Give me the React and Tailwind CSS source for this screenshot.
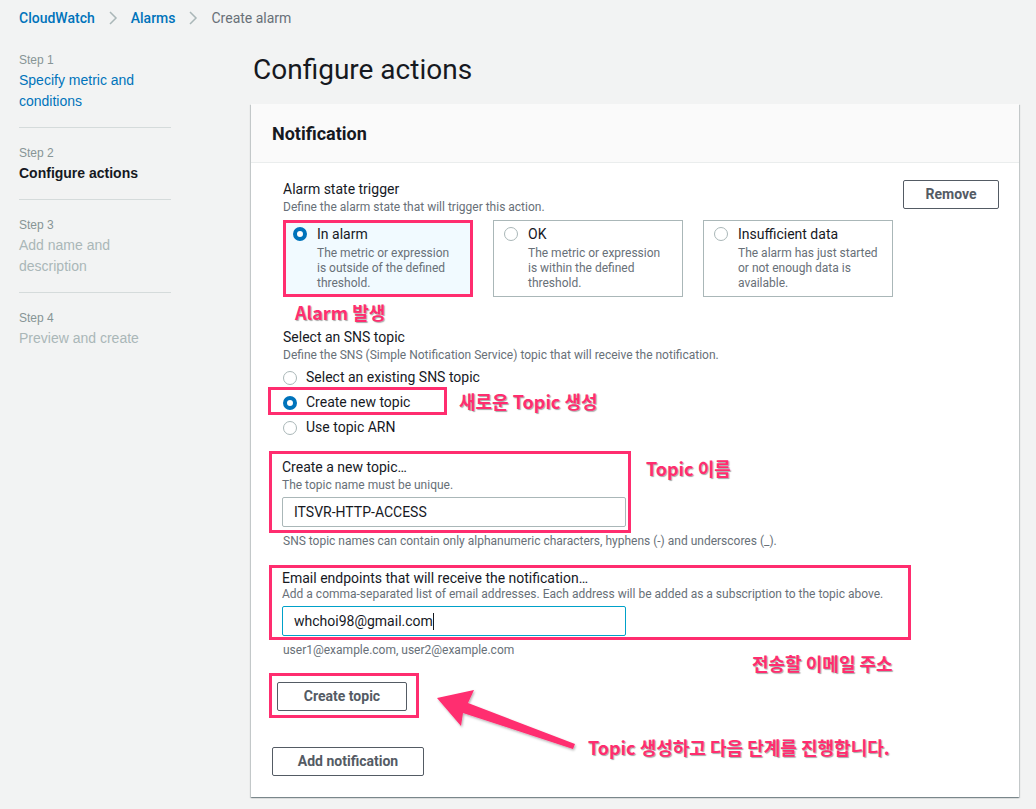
import React from "react";

const ember = { fontFamily: "Roboto, 'Liberation Sans', sans-serif" };

function Radio({ checked }) {
  return checked ? (
    <span className="inline-block w-[14px] h-[14px] rounded-full border-[4px] border-[#0073bb] bg-white shrink-0" />
  ) : (
    <span className="inline-block w-[14px] h-[14px] rounded-full border border-[#aab7b8] bg-white shrink-0" />
  );
}

function Chevron() {
  return (
    <svg width="10" height="16" viewBox="0 0 10 16" className="mx-[13px]">
      <path d="M2 2 L8 8 L2 14" fill="none" stroke="#aab7b8" strokeWidth="1.5" />
    </svg>
  );
}

const annot =
  "font-bold text-[#ff2d6f] text-[18px] leading-[22px] [text-shadow:1px_1px_1px_rgba(0,0,0,0.35)] whitespace-nowrap";
const annotFont = { fontFamily: "'Noto Sans CJK KR', 'Noto Sans', sans-serif" };

function Tile({ checked, title, lines, highlight }) {
  return (
    <div
      className={
        "w-[190px] h-[77px] flex gap-[10px] " +
        (highlight
          ? "border-[3px] border-[#ff2d6f] bg-[#f1faff] pl-[7px] pt-[2px]"
          : "border border-[#aab7b8] bg-white pl-[10px] pt-[4px]")
      }
    >
      <div className="h-[18px] flex items-center">
        <Radio checked={checked} />
      </div>
      <div>
        <div className="text-[14px] leading-[18px] text-[#16191f] whitespace-nowrap">{title}</div>
        <div className="mt-[3px] text-[12px] leading-[15px] text-[#687078] whitespace-nowrap">
          {lines.map((l, i) => (
            <div key={i}>{l}</div>
          ))}
        </div>
      </div>
    </div>
  );
}

function NavItem({ step, title, active, link, last }) {
  return (
    <div className={"pt-[16px] pb-[15px] " + (last ? "" : "border-b border-[#d5dbdb]")}>
      <div className="text-[12px] leading-[18px] text-[#879596]">{step}</div>
      <div
        className={
          "mt-[1px] text-[14px] leading-[21px] " +
          (active ? "font-bold text-[#16191f]" : link ? "text-[#0073bb]" : "text-[#aab7b8]")
        }
      >
        {title}
      </div>
    </div>
  );
}

export default function App() {
  return (
    <div className="min-h-[809px] bg-[#f2f3f3] pl-[19px] pt-[8px]">
      {/* Breadcrumb */}
      <div className="flex items-center text-[14px] leading-[20px]" style={ember}>
        <span className="text-[#0073bb] font-medium">CloudWatch</span>
        <Chevron />
        <span className="text-[#0073bb] font-medium">Alarms</span>
        <Chevron />
        <span className="text-[#687078]">Create alarm</span>
      </div>

      <div className="flex mt-[7px]">
        {/* Left nav */}
        <div className="w-[152px] shrink-0" style={{ fontFamily: "'Liberation Sans', Arial, sans-serif" }}>
          <NavItem step="Step 1" title="Specify metric and conditions" link />
          <NavItem step="Step 2" title="Configure actions" active />
          <NavItem step="Step 3" title="Add name and description" />
          <NavItem step="Step 4" title="Preview and create" last />
        </div>

        {/* Main */}
        <div className="ml-[80px] w-[768px] pt-[18px]" style={ember}>
          <h1 className="pl-[2px] text-[28px] leading-[34px] text-[#16191f] font-normal">Configure actions</h1>

          <div className="relative mt-[17px] bg-white shadow-[0_1px_1px_0_rgba(0,28,36,0.3),1px_1px_1px_0_rgba(0,28,36,0.15),-1px_1px_1px_0_rgba(0,28,36,0.15)]">
            <div className="h-[59px] flex items-center pl-[21px] pt-[1px] bg-[#fafafa] border-b border-[#eaeded]">
              <h2 className="text-[18px] font-bold text-[#16191f]">Notification</h2>
            </div>

            <div className="pl-[32px] pr-[20px] pt-[17px] pb-[21px]">
              {/* Alarm state trigger */}
              <div className="flex">
                <div>
                  <div className="text-[14px] leading-[18px] text-[#16191f]">Alarm state trigger</div>
                  <div className="mt-[1px] text-[12px] leading-[16px] text-[#687078]">
                    Define the alarm state that will trigger this action.
                  </div>
                  <div className="mt-[5px] flex gap-[20px]">
                    <Tile
                      checked
                      highlight
                      title="In alarm"
                      lines={["The metric or expression", "is outside of the defined", "threshold."]}
                    />
                    <Tile
                      title="OK"
                      lines={["The metric or expression", "is within the defined", "threshold."]}
                    />
                    <Tile
                      title="Insufficient data"
                      lines={["The alarm has just started", "or not enough data is", "available."]}
                    />
                  </div>
                </div>
                <button className="ml-auto w-[96px] h-[29px] border border-[#545b64] rounded-[2px] text-[14px] font-bold text-[#545b64] bg-white">
                  Remove
                </button>
              </div>

              <div className={annot + " mt-[4px] ml-[12px]"} style={annotFont}>
                Alarm 발생
              </div>

              {/* SNS topic */}
              <div className="mt-[5px] text-[14px] leading-[18px] text-[#16191f]">Select an SNS topic</div>
              <div className="mt-[1px] text-[12px] leading-[16px] text-[#687078]">
                Define the SNS (Simple Notification Service) topic that will receive the notification.
              </div>
              <div className="mt-[2px]">
                <div className="h-[25px] flex items-center gap-[9px] text-[14px] text-[#16191f]">
                  <Radio />
                  <span>Select an existing SNS topic</span>
                </div>
                <div className="relative h-[25px] flex items-center gap-[9px] text-[14px] text-[#16191f]">
                  <div className="absolute left-[-15px] top-[-3px] w-[179px] h-[28px] border-[3px] border-[#ff2d6f]" />
                  <Radio checked />
                  <span>Create new topic</span>
                  <span className={annot + " absolute left-[176px] top-[0px]"} style={annotFont}>
                    새로운 Topic 생성
                  </span>
                </div>
                <div className="h-[25px] flex items-center gap-[9px] text-[14px] text-[#16191f]">
                  <Radio />
                  <span>Use topic ARN</span>
                </div>
              </div>

              {/* Create a new topic */}
              <div className="mt-[11px] flex items-start ml-[-14px]">
                <div className="w-[362px] h-[82px] border-[3px] border-[#ff2d6f] pl-[10px] pt-[4px]">
                  <div className="text-[14px] leading-[18px] text-[#16191f]">Create a new topic…</div>
                  <div className="mt-[1px] text-[12px] leading-[16px] text-[#687078]">
                    The topic name must be unique.
                  </div>
                  <div className="mt-[4px] w-[344px] h-[30px] border border-[#aab7b8] rounded-[2px] flex items-center pl-[11px] text-[14px] text-[#16191f]">
                    ITSVR-HTTP-ACCESS
                  </div>
                </div>
                <div className={annot + " ml-[15px] mt-[6px]"} style={annotFont}>
                  Topic 이름
                </div>
              </div>
              <div className="text-[12px] leading-[16px] text-[#687078]">
                SNS topic names can contain only alphanumeric characters, hyphens (-) and underscores (_).
              </div>

              {/* Email endpoints */}
              <div className="mt-[16px] ml-[-14px] w-[642px] h-[75px] border-[3px] border-[#ff2d6f] pl-[10px] pt-[1px]">
                <div className="text-[14px] leading-[18px] text-[#16191f]">
                  Email endpoints that will receive the notification…
                </div>
                <div className="text-[12px] leading-[15px] text-[#687078]">
                  Add a comma-separated list of email addresses. Each address will be added as a subscription to the topic above.
                </div>
                <div className="mt-[4px] w-[344px] h-[30px] border border-[#00a1c9] rounded-[2px] flex items-center pl-[11px] text-[14px] text-[#16191f]">
                  whchoi98@gmail.com<span className="inline-block w-[1px] h-[17px] bg-[#16191f]" />
                </div>
              </div>
              <div className="mt-[2px] text-[12px] leading-[16px] text-[#687078]">
                user1@example.com, user2@example.com
              </div>

              {/* Create topic */}
              <div className="mt-[15px] ml-[-14px] w-[150px] h-[45px] border-[3px] border-[#ff2d6f] pl-[5px] pt-[6px]">
                <button className="w-[130px] h-[29px] border border-[#545b64] rounded-[2px] text-[14px] font-bold text-[#545b64] bg-white">
                  Create topic
                </button>
              </div>

              <button className="mt-[29px] ml-[-11px] w-[152px] h-[29px] border border-[#545b64] rounded-[2px] text-[14px] font-bold text-[#545b64] bg-white">
                Add notification
              </button>
            </div>

            {/* Overlay annotations */}
            <div className={annot + " absolute left-[501px] top-[548px]"} style={annotFont}>
              전송할 이메일 주소
            </div>
            <svg
              className="absolute left-0 top-0 pointer-events-none"
              width="768"
              height="693"
              viewBox="0 0 768 693"
            >
              <defs>
                <filter id="sh" x="-20%" y="-20%" width="140%" height="140%">
                  <feDropShadow dx="1" dy="1.5" stdDeviation="1" floodColor="#000" floodOpacity="0.3" />
                </filter>
              </defs>
              <polygon
                points="186,594 223,586 217,599 324,640 322,645 212,609 210,622"
                fill="#ff2d6f"
                filter="url(#sh)"
              />
            </svg>
            <div className={annot + " absolute left-[337px] top-[632px]"} style={annotFont}>
              Topic 생성하고 다음 단계를 진행합니다.
            </div>
          </div>
        </div>
      </div>
    </div>
  );
}
